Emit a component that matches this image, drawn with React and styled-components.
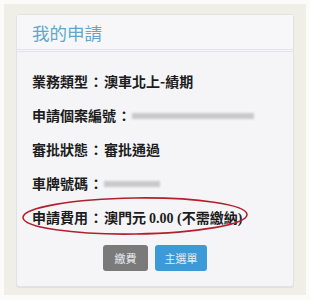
import React from "react";
import styled, { createGlobalStyle } from "styled-components";

const Global = createGlobalStyle`
  html, body { margin: 0; padding: 0; background: #fbfbf9; }
  body { font-family: "Noto Sans CJK TC", "Noto Sans", sans-serif; }
`;

const Frame = styled.div`
  margin: 4px 4px 0 4px;
  height: 291px;
  box-sizing: border-box;
  background: #efefe7;
  padding: 10px 12px 8px 12px;
`;

const Card = styled.div`
  background: #f5f5f8;
  border: 1px solid #e2e2e4;
  border-radius: 3px;
  box-shadow: 0 1px 1px rgba(0, 0, 0, 0.06);
  height: 100%;
  box-sizing: border-box;
  display: flex;
  flex-direction: column;
`;

const Header = styled.div`
  height: 34px;
  padding: 0 15px;
  display: flex;
  align-items: center;
  background: #f7f7fa;
  border-bottom: 3px double #e4e4e8;
`;

const Title = styled.h2`
  margin: 0;
  font-size: 17.5px;
  font-weight: 400;
  color: #62a6cd;
`;

const Body = styled.div`
  padding: 12px 15px 0 15px;
  display: flex;
  flex-direction: column;
`;

const Row = styled.div`
  position: relative;
  height: 34px;
  line-height: 34px;
  font-size: 14px;
  font-weight: 700;
  color: #1c1c1c;
  white-space: nowrap;
`;

const Colon = styled.span`
  display: inline-block;
  width: 1.15em;
  text-align: center;
`;

const Num = styled.span`
  font-family: "Liberation Serif", "Times New Roman", serif;
  font-size: 14px;
  margin-left: ${(p) => (p.$lead ? 3 : 0)}px;
`;

const Redact = styled.span`
  display: inline-block;
  vertical-align: middle;
  width: ${(p) => p.$w}px;
  height: 6px;
  margin-top: -2px;
  background: #c9c9cc;
  filter: blur(1px);
`;

const Ring = styled.svg`
  position: absolute;
  left: -10px;
  top: -4px;
  width: 226px;
  height: 42px;
  overflow: visible;
  pointer-events: none;
`;

const Buttons = styled.div`
  display: flex;
  justify-content: center;
  gap: 7px;
  margin-top: 11px;
`;

const Button = styled.button`
  border: none;
  border-radius: 3px;
  height: 26px;
  width: ${(p) => p.$w}px;
  padding: 0;
  font-family: inherit;
  font-size: 11px;
  color: #e6ecf2;
  background: ${(p) => (p.$primary ? "#3b9bd8" : "#7a7a7a")};
`;

export default function App() {
  return (
    <>
      <Global />
      <Frame>
        <Card>
          <Header>
            <Title>我的申請</Title>
          </Header>
          <Body>
            <Row>
              業務類型<Colon>：</Colon>澳車北上-績期
            </Row>
            <Row>
              申請個案編號<Colon>：</Colon>
              <Redact $w={122} />
            </Row>
            <Row>
              審批狀態<Colon>：</Colon>審批通過
            </Row>
            <Row>
              車牌號碼<Colon>：</Colon>
              <Redact $w={56} />
            </Row>
            <Row>
              申請費用<Colon>：</Colon>澳門元<Num $lead>0.00 (</Num>不需繳納
              <Num>)</Num>
              <Ring viewBox="0 0 226 42">
                <ellipse
                  cx="113"
                  cy="20"
                  rx="112"
                  ry="18"
                  fill="none"
                  stroke="#b3202c"
                  strokeWidth="1.6"
                  transform="rotate(-0.8 113 20)"
                />
              </Ring>
            </Row>
            <Buttons>
              <Button $w={45}>繳費</Button>
              <Button $primary $w={52}>主選單</Button>
            </Buttons>
          </Body>
        </Card>
      </Frame>
    </>
  );
}
